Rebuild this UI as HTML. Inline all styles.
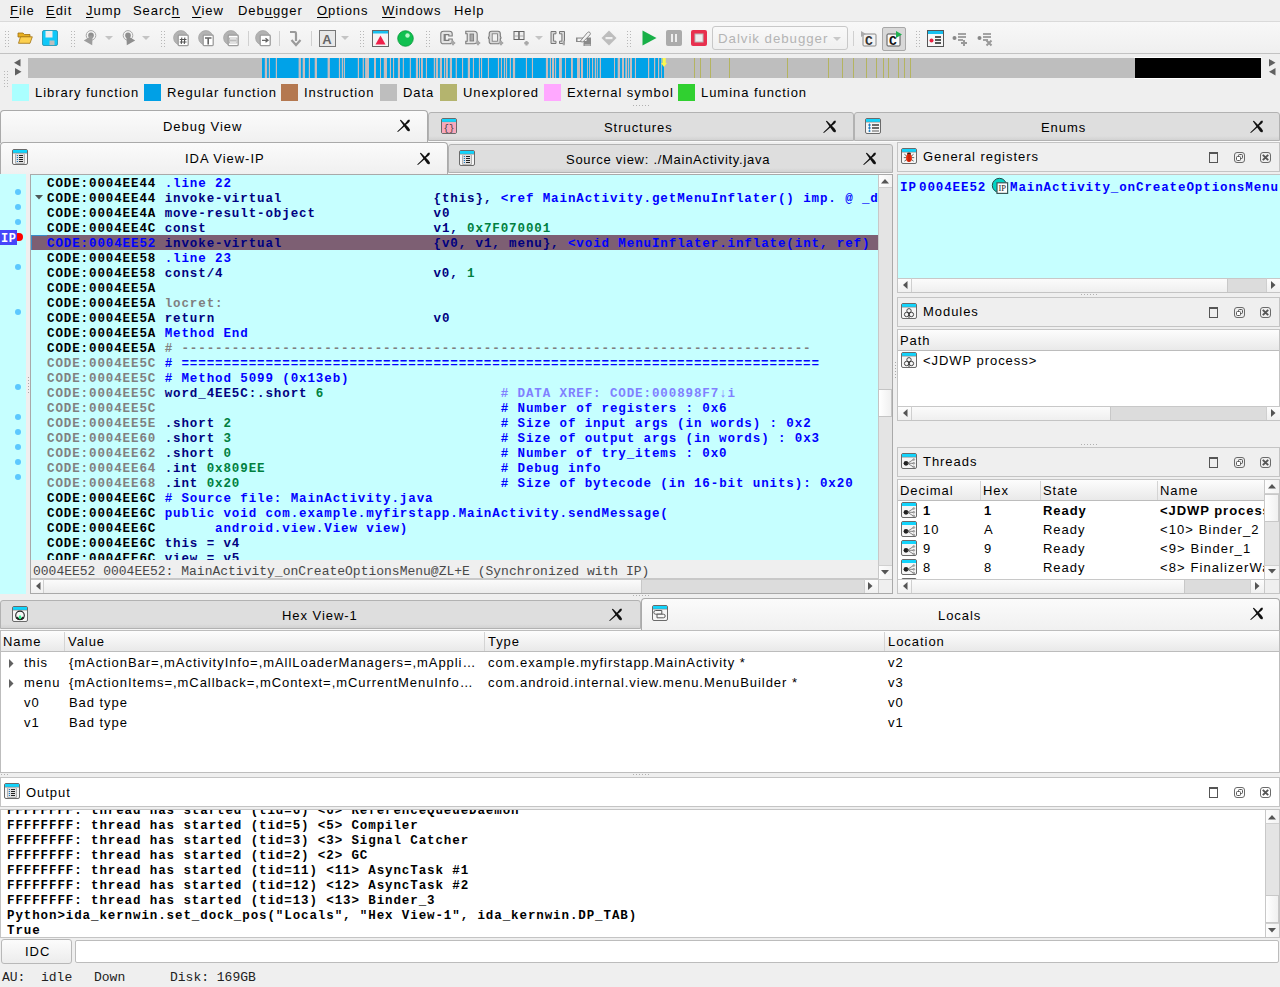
<!DOCTYPE html><html><head><meta charset="utf-8"><style>
*{box-sizing:border-box;margin:0;padding:0}
html,body{width:1280px;height:987px;overflow:hidden;background:#efefef;font-family:"Liberation Sans",sans-serif;font-size:13px;color:#000;letter-spacing:0.95px}
.a{position:absolute}
.t{position:absolute;white-space:pre;line-height:15px}
.cl{position:absolute;font-family:"Liberation Mono",monospace;font-weight:bold;font-size:12.5px;letter-spacing:0.9px;white-space:pre;line-height:15px;height:15px;margin-top:1px}
.tabsel{position:absolute;background:linear-gradient(#fbfbfb,#f0f0f0);border:1px solid #aaaaaa;border-bottom:none;border-radius:4px 4px 0 0}
.tabun{position:absolute;background:linear-gradient(#dedede 85%,#d2d2d2);border:1px solid #b2b2b2;border-radius:3px 3px 0 0}
.hdr{position:absolute;background:linear-gradient(#fdfdfd,#e9e9e9);border-bottom:1px solid #bcbcbc}
svg{position:absolute;overflow:visible}
</style></head><body>
<div class="t" style="left:10px;top:3px"><u style="text-decoration:underline;text-underline-offset:2px;text-decoration-thickness:1px">F</u>ile</div>
<div class="t" style="left:46px;top:3px"><u style="text-decoration:underline;text-underline-offset:2px;text-decoration-thickness:1px">E</u>dit</div>
<div class="t" style="left:86px;top:3px"><u style="text-decoration:underline;text-underline-offset:2px;text-decoration-thickness:1px">J</u>ump</div>
<div class="t" style="left:133px;top:3px">Searc<u style="text-decoration:underline;text-underline-offset:2px;text-decoration-thickness:1px">h</u></div>
<div class="t" style="left:192px;top:3px"><u style="text-decoration:underline;text-underline-offset:2px;text-decoration-thickness:1px">V</u>iew</div>
<div class="t" style="left:238px;top:3px">Deb<u style="text-decoration:underline;text-underline-offset:2px;text-decoration-thickness:1px">u</u>gger</div>
<div class="t" style="left:317px;top:3px"><u style="text-decoration:underline;text-underline-offset:2px;text-decoration-thickness:1px">O</u>ptions</div>
<div class="t" style="left:382px;top:3px"><u style="text-decoration:underline;text-underline-offset:2px;text-decoration-thickness:1px">W</u>indows</div>
<div class="t" style="left:454px;top:3px">Help</div>
<div class="a" style="left:0px;top:21px;width:1280px;height:1px;background:#dadada;"></div>
<div class="a" style="left:0px;top:22px;width:1280px;height:31px;background:linear-gradient(#f8f8f8,#efefef);"></div>
<div class="a" style="left:0px;top:53px;width:1280px;height:1px;background:#c2c2c2;"></div>
<svg style="left:5px;top:30px" width="5" height="17" viewBox="0 0 5 17"><rect x="0" y="1" width="1" height="1" fill="#b8b8b8"/><rect x="3" y="1" width="1" height="1" fill="#b8b8b8"/><rect x="0" y="4" width="1" height="1" fill="#b8b8b8"/><rect x="3" y="4" width="1" height="1" fill="#b8b8b8"/><rect x="0" y="7" width="1" height="1" fill="#b8b8b8"/><rect x="3" y="7" width="1" height="1" fill="#b8b8b8"/><rect x="0" y="10" width="1" height="1" fill="#b8b8b8"/><rect x="3" y="10" width="1" height="1" fill="#b8b8b8"/><rect x="0" y="13" width="1" height="1" fill="#b8b8b8"/><rect x="3" y="13" width="1" height="1" fill="#b8b8b8"/><rect x="0" y="16" width="1" height="1" fill="#b8b8b8"/><rect x="3" y="16" width="1" height="1" fill="#b8b8b8"/></svg>
<svg style="left:71px;top:30px" width="5" height="17" viewBox="0 0 5 17"><rect x="0" y="1" width="1" height="1" fill="#b8b8b8"/><rect x="3" y="1" width="1" height="1" fill="#b8b8b8"/><rect x="0" y="4" width="1" height="1" fill="#b8b8b8"/><rect x="3" y="4" width="1" height="1" fill="#b8b8b8"/><rect x="0" y="7" width="1" height="1" fill="#b8b8b8"/><rect x="3" y="7" width="1" height="1" fill="#b8b8b8"/><rect x="0" y="10" width="1" height="1" fill="#b8b8b8"/><rect x="3" y="10" width="1" height="1" fill="#b8b8b8"/><rect x="0" y="13" width="1" height="1" fill="#b8b8b8"/><rect x="3" y="13" width="1" height="1" fill="#b8b8b8"/><rect x="0" y="16" width="1" height="1" fill="#b8b8b8"/><rect x="3" y="16" width="1" height="1" fill="#b8b8b8"/></svg>
<svg style="left:161px;top:30px" width="5" height="17" viewBox="0 0 5 17"><rect x="0" y="1" width="1" height="1" fill="#b8b8b8"/><rect x="3" y="1" width="1" height="1" fill="#b8b8b8"/><rect x="0" y="4" width="1" height="1" fill="#b8b8b8"/><rect x="3" y="4" width="1" height="1" fill="#b8b8b8"/><rect x="0" y="7" width="1" height="1" fill="#b8b8b8"/><rect x="3" y="7" width="1" height="1" fill="#b8b8b8"/><rect x="0" y="10" width="1" height="1" fill="#b8b8b8"/><rect x="3" y="10" width="1" height="1" fill="#b8b8b8"/><rect x="0" y="13" width="1" height="1" fill="#b8b8b8"/><rect x="3" y="13" width="1" height="1" fill="#b8b8b8"/><rect x="0" y="16" width="1" height="1" fill="#b8b8b8"/><rect x="3" y="16" width="1" height="1" fill="#b8b8b8"/></svg>
<svg style="left:360px;top:30px" width="5" height="17" viewBox="0 0 5 17"><rect x="0" y="1" width="1" height="1" fill="#b8b8b8"/><rect x="3" y="1" width="1" height="1" fill="#b8b8b8"/><rect x="0" y="4" width="1" height="1" fill="#b8b8b8"/><rect x="3" y="4" width="1" height="1" fill="#b8b8b8"/><rect x="0" y="7" width="1" height="1" fill="#b8b8b8"/><rect x="3" y="7" width="1" height="1" fill="#b8b8b8"/><rect x="0" y="10" width="1" height="1" fill="#b8b8b8"/><rect x="3" y="10" width="1" height="1" fill="#b8b8b8"/><rect x="0" y="13" width="1" height="1" fill="#b8b8b8"/><rect x="3" y="13" width="1" height="1" fill="#b8b8b8"/><rect x="0" y="16" width="1" height="1" fill="#b8b8b8"/><rect x="3" y="16" width="1" height="1" fill="#b8b8b8"/></svg>
<svg style="left:426px;top:30px" width="5" height="17" viewBox="0 0 5 17"><rect x="0" y="1" width="1" height="1" fill="#b8b8b8"/><rect x="3" y="1" width="1" height="1" fill="#b8b8b8"/><rect x="0" y="4" width="1" height="1" fill="#b8b8b8"/><rect x="3" y="4" width="1" height="1" fill="#b8b8b8"/><rect x="0" y="7" width="1" height="1" fill="#b8b8b8"/><rect x="3" y="7" width="1" height="1" fill="#b8b8b8"/><rect x="0" y="10" width="1" height="1" fill="#b8b8b8"/><rect x="3" y="10" width="1" height="1" fill="#b8b8b8"/><rect x="0" y="13" width="1" height="1" fill="#b8b8b8"/><rect x="3" y="13" width="1" height="1" fill="#b8b8b8"/><rect x="0" y="16" width="1" height="1" fill="#b8b8b8"/><rect x="3" y="16" width="1" height="1" fill="#b8b8b8"/></svg>
<svg style="left:627px;top:30px" width="5" height="17" viewBox="0 0 5 17"><rect x="0" y="1" width="1" height="1" fill="#b8b8b8"/><rect x="3" y="1" width="1" height="1" fill="#b8b8b8"/><rect x="0" y="4" width="1" height="1" fill="#b8b8b8"/><rect x="3" y="4" width="1" height="1" fill="#b8b8b8"/><rect x="0" y="7" width="1" height="1" fill="#b8b8b8"/><rect x="3" y="7" width="1" height="1" fill="#b8b8b8"/><rect x="0" y="10" width="1" height="1" fill="#b8b8b8"/><rect x="3" y="10" width="1" height="1" fill="#b8b8b8"/><rect x="0" y="13" width="1" height="1" fill="#b8b8b8"/><rect x="3" y="13" width="1" height="1" fill="#b8b8b8"/><rect x="0" y="16" width="1" height="1" fill="#b8b8b8"/><rect x="3" y="16" width="1" height="1" fill="#b8b8b8"/></svg>
<svg style="left:916px;top:30px" width="5" height="17" viewBox="0 0 5 17"><rect x="0" y="1" width="1" height="1" fill="#b8b8b8"/><rect x="3" y="1" width="1" height="1" fill="#b8b8b8"/><rect x="0" y="4" width="1" height="1" fill="#b8b8b8"/><rect x="3" y="4" width="1" height="1" fill="#b8b8b8"/><rect x="0" y="7" width="1" height="1" fill="#b8b8b8"/><rect x="3" y="7" width="1" height="1" fill="#b8b8b8"/><rect x="0" y="10" width="1" height="1" fill="#b8b8b8"/><rect x="3" y="10" width="1" height="1" fill="#b8b8b8"/><rect x="0" y="13" width="1" height="1" fill="#b8b8b8"/><rect x="3" y="13" width="1" height="1" fill="#b8b8b8"/><rect x="0" y="16" width="1" height="1" fill="#b8b8b8"/><rect x="3" y="16" width="1" height="1" fill="#b8b8b8"/></svg>
<svg style="left:17px;top:31px" width="16" height="13" viewBox="0 0 16 13"><path d="M1 2 L6 2 L7.5 3.5 L13 3.5 L13 6 L1 6 Z" fill="#e8b020" stroke="#a07010" stroke-width="0.8"/><path d="M1.5 12.3 L3.5 5.8 L15.3 5.8 L13 12.3 Z" fill="#fcd050" stroke="#a07010" stroke-width="0.8"/></svg>
<svg style="left:42px;top:30px" width="16" height="16" viewBox="0 0 16 16"><rect x="0.5" y="0.5" width="15" height="15" rx="1.5" fill="#10c8f8" stroke="#1890b0" stroke-width="0.8"/><rect x="3.5" y="1" width="7" height="6.5" fill="#eeeeee"/><rect x="7.5" y="10.5" width="5" height="4.5" fill="#bdbdbd"/></svg>
<svg style="left:83px;top:30px" width="15" height="16" viewBox="0 0 15 16"><circle cx="8" cy="5.4" r="4.8" fill="#f4f4f4" stroke="#a8a8a8" stroke-width="1"/><circle cx="8" cy="5.4" r="2.8" fill="#8e8e8e"/><path d="M0.8 10.5 L6.2 7.2 L6.2 5.5 L9.6 5.5 L9.2 15.2 Z" fill="#9c9c9c"/></svg>
<svg style="left:105px;top:36px" width="8" height="5" viewBox="0 0 8 5"><path d="M0 0 L8 0 L4 4 Z" fill="#c4c4c4"/></svg>
<svg style="left:122px;top:30px" width="15" height="16" viewBox="0 0 15 16"><circle cx="6" cy="5.4" r="4.8" fill="#f4f4f4" stroke="#a8a8a8" stroke-width="1"/><circle cx="6" cy="5.4" r="2.8" fill="#8e8e8e"/><path d="M13.2 10.5 L7.8 7.2 L7.8 5.5 L4.4 5.5 L4.8 15.2 Z" fill="#8e8e8e"/></svg>
<svg style="left:142px;top:36px" width="8" height="5" viewBox="0 0 8 5"><path d="M0 0 L8 0 L4 4 Z" fill="#c4c4c4"/></svg>
<svg style="left:173px;top:30px" width="17" height="17" viewBox="0 0 17 17"><circle cx="7.8" cy="7.8" r="7.2" fill="#b2b2b2" stroke="#a4a4a4" stroke-width="0.8"/><rect x="5.2" y="5.2" width="10" height="10.4" rx="0.8" fill="#ffffff" stroke="#9c9c9c" stroke-width="1.3"/><path d="M8.8 7.5 L8.3 14 M11.8 7.5 L11.3 14 M6.8 9.5 L13.5 9.5 M6.8 12 L13.5 12" stroke="#555" stroke-width="1.1"/></svg>
<svg style="left:198px;top:30px" width="17" height="17" viewBox="0 0 17 17"><circle cx="7.8" cy="7.8" r="7.2" fill="#b2b2b2" stroke="#a4a4a4" stroke-width="0.8"/><rect x="5.2" y="5.2" width="10" height="10.4" rx="0.8" fill="#ffffff" stroke="#9c9c9c" stroke-width="1.3"/><path d="M7 8 L13.5 8 M10.2 8 L10.2 14.5" stroke="#666" stroke-width="1.6"/></svg>
<svg style="left:223px;top:30px" width="17" height="17" viewBox="0 0 17 17"><circle cx="7.8" cy="7.8" r="7.2" fill="#b2b2b2" stroke="#a4a4a4" stroke-width="0.8"/><rect x="5.2" y="5.2" width="10" height="10.4" rx="0.8" fill="#ffffff" stroke="#9c9c9c" stroke-width="1.3"/><path d="M7 10.5 L13.5 10.5" stroke="#bbb" stroke-width="2.2"/><rect x="6.5" y="8" width="7.5" height="5" fill="none" stroke="#999" stroke-width="0.6"/></svg>
<div class="a" style="left:248px;top:31px;width:1px;height:15px;background:#d0d0d0;"></div>
<svg style="left:255px;top:30px" width="17" height="17" viewBox="0 0 17 17"><circle cx="7.8" cy="7.8" r="7.2" fill="#b2b2b2" stroke="#a4a4a4" stroke-width="0.8"/><rect x="5.2" y="5.2" width="10" height="10.4" rx="0.8" fill="#ffffff" stroke="#9c9c9c" stroke-width="1.3"/><path d="M7 10.3 L12.5 10.3 M10.5 8.3 L13 10.3 L10.5 12.3" stroke="#666" stroke-width="1.3" fill="none"/></svg>
<div class="a" style="left:279px;top:31px;width:1px;height:15px;background:#d0d0d0;"></div>
<svg style="left:289px;top:30px" width="12" height="16" viewBox="0 0 12 16"><path d="M1 2 L6 2 Q7 2 7 4 L7 11" stroke="#9a9a9a" stroke-width="2.2" fill="none"/><path d="M2.5 10 L7 15 L11.5 10" stroke="#9a9a9a" stroke-width="2.2" fill="none"/></svg>
<div class="a" style="left:311px;top:31px;width:1px;height:15px;background:#d0d0d0;"></div>
<svg style="left:319px;top:30px" width="17" height="17" viewBox="0 0 17 17"><rect x="0.5" y="0.5" width="16" height="16" fill="#e8e8e8" stroke="#777" stroke-width="1"/><text x="8.5" y="13.5" font-family="Liberation Sans" font-weight="bold" font-size="13" text-anchor="middle" fill="#666">A</text></svg>
<svg style="left:341px;top:36px" width="8" height="5" viewBox="0 0 8 5"><path d="M0 0 L8 0 L4 4 Z" fill="#c4c4c4"/></svg>
<svg style="left:372px;top:30px" width="17" height="17" viewBox="0 0 17 17"><rect x="0.5" y="0.5" width="16" height="16" fill="#f4f4f4" stroke="#666"/><rect x="1" y="1" width="15" height="2.5" fill="#18c0f0"/><path d="M3.5 14.5 L8.5 5.5 L13.5 14.5 Z" fill="#f0204a"/></svg>
<svg style="left:397px;top:30px" width="17" height="17" viewBox="0 0 17 17"><circle cx="8.5" cy="8.5" r="7.8" fill="#10c050" stroke="#089838" stroke-width="0.8"/><circle cx="10.5" cy="5.5" r="2.2" fill="#b8f8c8"/></svg>
<svg style="left:440px;top:30px" width="16" height="17" viewBox="0 0 16 17"><path d="M3.5 1.2 H9.5 Q12.2 1.2 12.2 3.8 V6 H8.8 V4.6 H5.2 V10.4 H8.8 V9 H12.2 V11.2 Q12.2 13.8 9.5 13.8 H3.5 Q0.8 13.8 0.8 11.2 V3.8 Q0.8 1.2 3.5 1.2 Z" fill="#e4e4e4" stroke="#7a7a7a" stroke-width="1.1"/><path d="M4.2 4 V11" stroke="#666" stroke-width="1"/><path d="M13 10.8 V15.2 M10.8 13 H15.2" stroke="#a8a8a8" stroke-width="2.2"/></svg>
<svg style="left:465px;top:30px" width="16" height="17" viewBox="0 0 16 17"><path d="M0.8 1.2 H9 Q12.2 1.2 12.2 4.4 V10.6 Q12.2 13.8 9 13.8 H0.8 V11.2 H2.2 V3.8 H0.8 Z" fill="#e4e4e4" stroke="#7a7a7a" stroke-width="1.1"/><rect x="5" y="4" width="3.6" height="7" fill="#a8a8a8" stroke="#777" stroke-width="0.8"/><path d="M13 10.8 V15.2 M10.8 13 H15.2" stroke="#a8a8a8" stroke-width="2.2"/></svg>
<svg style="left:488px;top:30px" width="16" height="17" viewBox="0 0 16 17"><path d="M3.5 1.2 H10 Q12.3 1.2 12.3 3.8 V5.8 Q13.6 7.5 12.3 9.2 V11.2 Q12.3 13.8 10 13.8 H3.5 Q1.2 13.8 1.2 11.2 V9.2 Q-0.1 7.5 1.2 5.8 V3.8 Q1.2 1.2 3.5 1.2 Z" fill="#d8d8d8" stroke="#7a7a7a" stroke-width="1.1"/><rect x="4.2" y="3.8" width="5.2" height="7.4" fill="#f2f2f2" stroke="#777" stroke-width="0.8"/><path d="M13 10.8 V15.2 M10.8 13 H15.2" stroke="#a8a8a8" stroke-width="2.2"/></svg>
<svg style="left:513px;top:30px" width="16" height="17" viewBox="0 0 16 17"><rect x="1" y="1.5" width="4.8" height="8" fill="#eee" stroke="#666" stroke-width="1"/><rect x="6.2" y="1.5" width="4.8" height="8" fill="#eee" stroke="#666" stroke-width="1"/><path d="M1.5 6 H5.3 M6.7 6 H10.5" stroke="#999" stroke-width="0.8"/><path d="M13.5 11 V15.5 M11.3 13.2 H15.7" stroke="#a8a8a8" stroke-width="2.2"/></svg>
<svg style="left:535px;top:36px" width="8" height="5" viewBox="0 0 8 5"><path d="M0 0 L8 0 L4 4 Z" fill="#c4c4c4"/></svg>
<svg style="left:550px;top:30px" width="17" height="17" viewBox="0 0 17 17"><path d="M1 1.5 H6 V3.8 H3.6 V11.2 H6 V13.5 H1 Z" fill="#d8d8d8" stroke="#777" stroke-width="1"/><path d="M9.5 1.5 H14.5 V13.5 H9.5 V11.2 H11.9 V3.8 H9.5 Z" fill="#d8d8d8" stroke="#777" stroke-width="1"/><path d="M13.8 10.8 V15.2 M10.8 13.8.8 H15.2" stroke="#a8a8a8" stroke-width="2.2"/></svg>
<svg style="left:575px;top:30px" width="17" height="17" viewBox="0 0 17 17"><path d="M1 7.5 H16 V16 H8.5 L8.5 12 L1 12 Z" fill="#8a8a8a"/><rect x="2.5" y="8.6" width="9" height="2.4" fill="#f4f4f4"/><path d="M5 11.5 L12.5 2.5 Q13.8 1.3 15 2.5 Q16 3.7 14.8 5 L7.8 12 Z" fill="#f2f2f2" stroke="#8a8a8a" stroke-width="1"/><path d="M9.6 14 H15.5 V16 H9.6 Z" fill="#b0b0b0"/></svg>
<svg style="left:601px;top:30px" width="16" height="16" viewBox="0 0 16 16"><path d="M8 0.5 L15.5 8 L8 15.5 L0.5 8 Z" fill="#bdbdbd"/><rect x="4.5" y="7" width="7" height="2.2" fill="#f0f0f0"/></svg>
<svg style="left:642px;top:30px" width="15" height="16" viewBox="0 0 15 16"><path d="M0.5 0.5 L14.5 8 L0.5 15.5 Z" fill="#18b048"/></svg>
<svg style="left:666px;top:30px" width="16" height="16" viewBox="0 0 16 16"><rect x="0" y="0" width="16" height="16" rx="2" fill="#ababab"/><rect x="5" y="4" width="2" height="8" fill="#eee"/><rect x="9" y="4" width="2" height="8" fill="#eee"/></svg>
<svg style="left:691px;top:30px" width="16" height="16" viewBox="0 0 16 16"><rect x="0" y="0" width="16" height="16" rx="2" fill="#e8304e"/><rect x="4" y="4" width="8" height="8" fill="#eee" stroke="#b8b8b8"/></svg>
<div class="a" style="left:712px;top:26px;width:136px;height:24px;border:1px solid #c8c8c8;border-radius:3px;background:linear-gradient(#f9f9f9,#f0f0f0)"></div>
<div class="t" style="left:718px;top:31px;color:#b4b4b4;font-size:13.3px">Dalvik debugger</div>
<svg style="left:833px;top:37px" width="8" height="5" viewBox="0 0 8 5"><path d="M0 0 L8 0 L4 4 Z" fill="#c8c8c8"/></svg>
<div class="a" style="left:853px;top:31px;width:1px;height:15px;background:#d0d0d0;"></div>
<svg style="left:860px;top:30px" width="18" height="17" viewBox="0 0 18 17"><rect x="3" y="4" width="13" height="12" rx="1" fill="#f3f3f3" stroke="#888"/><path d="M1 1 L6 4 L1 7 Z" fill="#aaa"/><text x="9.5" y="14.5" font-family="Liberation Mono" font-weight="bold" font-size="13" text-anchor="middle" fill="#333">C</text></svg>
<div class="a" style="left:882px;top:27px;width:24px;height:24px;border:1px solid #a8a8a8;border-radius:2px;background:#d8d8d8"></div>
<svg style="left:886px;top:30px" width="18" height="17" viewBox="0 0 18 17"><rect x="1" y="4" width="13" height="12" rx="1" fill="#fafafa" stroke="#555"/><path d="M10 1 L16 4.5 L10 8 Z" fill="#20b050"/><text x="7.5" y="14.5" font-family="Liberation Mono" font-weight="bold" font-size="13" text-anchor="middle" fill="#111">C</text></svg>
<svg style="left:927px;top:30px" width="17" height="17" viewBox="0 0 17 17"><rect x="0.5" y="0.5" width="16" height="16" fill="#f7f7f7" stroke="#555"/><rect x="1" y="1" width="15" height="3" fill="#18c0f0"/><circle cx="4.5" cy="10.5" r="2" fill="#e82040"/><path d="M8 7 L14 7 M8 10 L14 10 M8 13 L14 13" stroke="#222" stroke-width="1.4"/></svg>
<svg style="left:952px;top:31px" width="17" height="16" viewBox="0 0 17 16"><circle cx="2.5" cy="7" r="2" fill="#888"/><path d="M6 3 L14 3 M6 6 L14 6 M6 9 L11 9" stroke="#888" stroke-width="1.3"/><path d="M9 12 L15 12 M12 9 L12 15" stroke="#999" stroke-width="2"/></svg>
<svg style="left:977px;top:31px" width="17" height="16" viewBox="0 0 17 16"><circle cx="2.5" cy="7" r="2" fill="#888"/><path d="M6 3 L14 3 M6 6 L14 6 M6 9 L11 9" stroke="#888" stroke-width="1.3"/><path d="M9.5 9.5 L14.5 14.5 M14.5 9.5 L9.5 14.5" stroke="#999" stroke-width="2"/></svg>
<svg style="left:4px;top:70px" width="5" height="18" viewBox="0 0 5 18"><rect x="0" y="1" width="1" height="1" fill="#b8b8b8"/><rect x="3" y="1" width="1" height="1" fill="#b8b8b8"/><rect x="0" y="4" width="1" height="1" fill="#b8b8b8"/><rect x="3" y="4" width="1" height="1" fill="#b8b8b8"/><rect x="0" y="7" width="1" height="1" fill="#b8b8b8"/><rect x="3" y="7" width="1" height="1" fill="#b8b8b8"/><rect x="0" y="10" width="1" height="1" fill="#b8b8b8"/><rect x="3" y="10" width="1" height="1" fill="#b8b8b8"/><rect x="0" y="13" width="1" height="1" fill="#b8b8b8"/><rect x="3" y="13" width="1" height="1" fill="#b8b8b8"/><rect x="0" y="16" width="1" height="1" fill="#b8b8b8"/><rect x="3" y="16" width="1" height="1" fill="#b8b8b8"/></svg>
<svg style="left:14px;top:59px" width="7" height="8" viewBox="0 0 7 8"><path d="M6.5 0 L6.5 7.5 L0 3.75 Z" fill="#606060"/></svg>
<svg style="left:15px;top:68px" width="7" height="8" viewBox="0 0 7 8"><path d="M0 0 L0 7.5 L6.5 3.75 Z" fill="#606060"/></svg>
<svg style="left:1269px;top:59px" width="7" height="8" viewBox="0 0 7 8"><path d="M0 0 L0 7.5 L6.5 3.75 Z" fill="#606060"/></svg>
<svg style="left:1269px;top:68px" width="7" height="8" viewBox="0 0 7 8"><path d="M6.5 0 L6.5 7.5 L0 3.75 Z" fill="#606060"/></svg>
<div class="a" style="left:28px;top:58px;width:234px;height:20px;background:#bebebe;"></div>
<svg style="left:262px;top:58px" width="402" height="20" viewBox="0 0 402 20"><rect x="0" y="0" width="402" height="20" fill="#00a2e8"/><rect x="2.8" y="0" width="2.3" height="20" fill="#c8bcbc"/><rect x="6.8" y="0" width="1.2" height="20" fill="#c8bcbc"/><rect x="13.8" y="0" width="1.2" height="20" fill="#c8bcbc"/><rect x="36.6" y="0" width="2.3" height="20" fill="#c8bcbc"/><rect x="40.7" y="0" width="2.3" height="20" fill="#c8bcbc"/><rect x="46.8" y="0" width="1.2" height="20" fill="#c8bcbc"/><rect x="52.7" y="0" width="2.3" height="20" fill="#c8bcbc"/><rect x="65.6" y="0" width="2.3" height="20" fill="#c8bcbc"/><rect x="76.9" y="0" width="1.2" height="20" fill="#c8bcbc"/><rect x="79.8" y="0" width="1.2" height="20" fill="#c8bcbc"/><rect x="81.8" y="0" width="1.2" height="20" fill="#c8bcbc"/><rect x="95.8" y="0" width="1.2" height="20" fill="#c8bcbc"/><rect x="100.7" y="0" width="1.2" height="20" fill="#c8bcbc"/><rect x="103.1" y="0" width="3.9" height="20" fill="#c8bcbc"/><rect x="112.0" y="0" width="2.0" height="20" fill="#c8bcbc"/><rect x="118.0" y="0" width="1.0" height="20" fill="#c8bcbc"/><rect x="121.8" y="0" width="3.2" height="20" fill="#c8bcbc"/><rect x="127.9" y="0" width="1.1" height="20" fill="#c8bcbc"/><rect x="131.0" y="0" width="1.1" height="20" fill="#c8bcbc"/><rect x="135.9" y="0" width="2.1" height="20" fill="#c8bcbc"/><rect x="140.8" y="0" width="1.1" height="20" fill="#c8bcbc"/><rect x="147.8" y="0" width="1.1" height="20" fill="#c8bcbc"/><rect x="153.9" y="0" width="2.1" height="20" fill="#c8bcbc"/><rect x="157.0" y="0" width="1.0" height="20" fill="#c8bcbc"/><rect x="159.0" y="0" width="1.9" height="20" fill="#c8bcbc"/><rect x="163.9" y="0" width="1.1" height="20" fill="#c8bcbc"/><rect x="171.8" y="0" width="1.2" height="20" fill="#c8bcbc"/><rect x="173.8" y="0" width="2.3" height="20" fill="#c8bcbc"/><rect x="177.8" y="0" width="2.2" height="20" fill="#c8bcbc"/><rect x="182.0" y="0" width="1.2" height="20" fill="#c8bcbc"/><rect x="184.0" y="0" width="1.9" height="20" fill="#c8bcbc"/><rect x="187.8" y="0" width="2.2" height="20" fill="#c8bcbc"/><rect x="193.7" y="0" width="1.2" height="20" fill="#c8bcbc"/><rect x="200.0" y="0" width="1.1" height="20" fill="#c8bcbc"/><rect x="205.8" y="0" width="2.2" height="20" fill="#c8bcbc"/><rect x="210.9" y="0" width="1.1" height="20" fill="#c8bcbc"/><rect x="216.9" y="0" width="1.1" height="20" fill="#c8bcbc"/><rect x="219.0" y="0" width="1.1" height="20" fill="#c8bcbc"/><rect x="225.9" y="0" width="1.1" height="20" fill="#c8bcbc"/><rect x="235.9" y="0" width="1.1" height="20" fill="#c8bcbc"/><rect x="238.9" y="0" width="1.1" height="20" fill="#c8bcbc"/><rect x="241.9" y="0" width="1.1" height="20" fill="#c8bcbc"/><rect x="243.9" y="0" width="1.2" height="20" fill="#c8bcbc"/><rect x="247.8" y="0" width="1.2" height="20" fill="#c8bcbc"/><rect x="250.9" y="0" width="2.2" height="20" fill="#c8bcbc"/><rect x="263.9" y="0" width="1.1" height="20" fill="#c8bcbc"/><rect x="269.9" y="0" width="1.1" height="20" fill="#c8bcbc"/><rect x="283.9" y="0" width="2.2" height="20" fill="#c8bcbc"/><rect x="287.8" y="0" width="1.2" height="20" fill="#c8bcbc"/><rect x="290.0" y="0" width="2.1" height="20" fill="#c8bcbc"/><rect x="293.0" y="0" width="1.1" height="20" fill="#c8bcbc"/><rect x="297.0" y="0" width="2.9" height="20" fill="#c8bcbc"/><rect x="303.0" y="0" width="1.0" height="20" fill="#c8bcbc"/><rect x="309.0" y="0" width="1.9" height="20" fill="#c8bcbc"/><rect x="315.0" y="0" width="3.0" height="20" fill="#c8bcbc"/><rect x="319.0" y="0" width="2.0" height="20" fill="#c8bcbc"/><rect x="325.0" y="0" width="0.9" height="20" fill="#c8bcbc"/><rect x="327.0" y="0" width="0.9" height="20" fill="#c8bcbc"/><rect x="330.0" y="0" width="1.1" height="20" fill="#c8bcbc"/><rect x="332.8" y="0" width="1.2" height="20" fill="#c8bcbc"/><rect x="334.8" y="0" width="1.0" height="20" fill="#c8bcbc"/><rect x="337.7" y="0" width="1.3" height="20" fill="#c8bcbc"/><rect x="352.0" y="0" width="1.0" height="20" fill="#c8bcbc"/><rect x="355.7" y="0" width="2.4" height="20" fill="#c8bcbc"/><rect x="359.9" y="0" width="2.1" height="20" fill="#c8bcbc"/><rect x="363.3" y="0" width="1.9" height="20" fill="#c8bcbc"/><rect x="366.0" y="0" width="1.2" height="20" fill="#c8bcbc"/><rect x="368.0" y="0" width="2.0" height="20" fill="#c8bcbc"/><rect x="372.9" y="0" width="1.1" height="20" fill="#c8bcbc"/><rect x="386.0" y="0" width="1.2" height="20" fill="#c8bcbc"/><rect x="392.0" y="0" width="1.2" height="20" fill="#c8bcbc"/><rect x="396.0" y="0" width="1.2" height="20" fill="#c8bcbc"/><rect x="399.0" y="0" width="0.8" height="20" fill="#c8bcbc"/></svg>
<div class="a" style="left:664px;top:58px;width:471px;height:20px;background:#bebebe;"></div>
<div class="a" style="left:694px;top:58px;width:1px;height:20px;background:#b4b460;"></div>
<div class="a" style="left:700px;top:58px;width:1px;height:20px;background:#b4b460;"></div>
<div class="a" style="left:710px;top:58px;width:1px;height:20px;background:#b4b460;"></div>
<div class="a" style="left:729px;top:58px;width:1px;height:20px;background:#b4b460;"></div>
<div class="a" style="left:787px;top:58px;width:1px;height:20px;background:#b4b460;"></div>
<div class="a" style="left:828px;top:58px;width:1px;height:20px;background:#b4b460;"></div>
<div class="a" style="left:842px;top:58px;width:1px;height:20px;background:#b4b460;"></div>
<div class="a" style="left:853px;top:58px;width:1px;height:20px;background:#b4b460;"></div>
<div class="a" style="left:866px;top:58px;width:1px;height:20px;background:#b4b460;"></div>
<div class="a" style="left:876px;top:58px;width:1px;height:20px;background:#b4b460;"></div>
<div class="a" style="left:883px;top:58px;width:1px;height:20px;background:#b4b460;"></div>
<div class="a" style="left:888px;top:58px;width:1px;height:20px;background:#b4b460;"></div>
<div class="a" style="left:898px;top:58px;width:1px;height:20px;background:#b4b460;"></div>
<div class="a" style="left:904px;top:58px;width:1px;height:20px;background:#b4b460;"></div>
<div class="a" style="left:910px;top:58px;width:1px;height:20px;background:#b4b460;"></div>
<svg style="left:661px;top:58px" width="6" height="9" viewBox="0 0 6 9"><path d="M1.3 0 L4.7 0 L4.7 5 L6 5 L3 9 L0 5 L1.3 5 Z" fill="#fcf850"/></svg>
<div class="a" style="left:1135px;top:58px;width:126px;height:20px;background:#000;"></div>
<div class="a" style="left:1134px;top:57px;width:128px;height:1px;background:#fff;"></div>
<div class="a" style="left:1134px;top:78px;width:128px;height:1px;background:#fff;"></div>
<div class="a" style="left:12px;top:84px;width:17px;height:17px;background:#aaffff;"></div>
<div class="t" style="left:35px;top:85px;">Library function</div>
<div class="a" style="left:144px;top:84px;width:17px;height:17px;background:#00a0e6;"></div>
<div class="t" style="left:167px;top:85px;">Regular function</div>
<div class="a" style="left:281px;top:84px;width:17px;height:17px;background:#b47850;"></div>
<div class="t" style="left:304px;top:85px;">Instruction</div>
<div class="a" style="left:380px;top:84px;width:17px;height:17px;background:#bebebe;"></div>
<div class="t" style="left:403px;top:85px;">Data</div>
<div class="a" style="left:440px;top:84px;width:17px;height:17px;background:#b4b46e;"></div>
<div class="t" style="left:463px;top:85px;">Unexplored</div>
<div class="a" style="left:544px;top:84px;width:17px;height:17px;background:#ffa8ff;"></div>
<div class="t" style="left:567px;top:85px;">External symbol</div>
<div class="a" style="left:678px;top:84px;width:17px;height:17px;background:#30d030;"></div>
<div class="t" style="left:701px;top:85px;">Lumina function</div>
<svg style="left:633px;top:105px" width="18" height="2" viewBox="0 0 18 2"><rect x="0" y="0" width="1" height="1" fill="#b0b0b0"/><rect x="3" y="0" width="1" height="1" fill="#b0b0b0"/><rect x="6" y="0" width="1" height="1" fill="#b0b0b0"/><rect x="9" y="0" width="1" height="1" fill="#b0b0b0"/><rect x="12" y="0" width="1" height="1" fill="#b0b0b0"/><rect x="15" y="0" width="1" height="1" fill="#b0b0b0"/></svg>
<div class="tabsel" style="left:0;top:110px;width:428px;height:33px"></div>
<div class="t" style="left:163px;top:119px;">Debug View</div>
<svg style="left:397px;top:119px" width="14" height="13" viewBox="0 0 14 13"><path d="M0.2 12.6 Q5 8.2 9.6 2.8 L10.9 4 Q6 9 0.9 12.9 Z" fill="#111"/><path d="M9.2 3.2 Q10.6 0.4 12.2 0.5 Q13.3 1.1 12.6 2.6 Q11.6 4.3 10.4 4.5 Z" fill="#111"/><path d="M3.2 0.9 Q3.6 0.6 4.1 1.1 L11.6 8.4 Q13.7 10.4 12.7 11.9 Q11.3 12.8 9.9 11.3 L3 1.6 Q2.8 1.1 3.2 0.9 Z" fill="#111"/></svg>
<div class="tabun" style="left:428px;top:112px;width:426px;height:29px"></div>
<svg style="left:441px;top:118px" width="16" height="16" viewBox="0 0 16 16"><rect x="0.5" y="0.5" width="15" height="15" rx="1.5" fill="#f6f6f6" stroke="#6a6a6a"/><rect x="1" y="1" width="14" height="3" fill="#12d4fc"/><line x1="1" y1="4.2" x2="15" y2="4.2" stroke="#777" stroke-width="0.6"/><rect x="1" y="4.4" width="14" height="10.6" fill="#f8a8bc"/><text x="8" y="13" font-family="Liberation Mono" font-size="9" text-anchor="middle" fill="#333" letter-spacing="0">{}</text></svg>
<div class="t" style="left:604px;top:120px;">Structures</div>
<svg style="left:823px;top:120px" width="14" height="13" viewBox="0 0 14 13"><path d="M0.2 12.6 Q5 8.2 9.6 2.8 L10.9 4 Q6 9 0.9 12.9 Z" fill="#111"/><path d="M9.2 3.2 Q10.6 0.4 12.2 0.5 Q13.3 1.1 12.6 2.6 Q11.6 4.3 10.4 4.5 Z" fill="#111"/><path d="M3.2 0.9 Q3.6 0.6 4.1 1.1 L11.6 8.4 Q13.7 10.4 12.7 11.9 Q11.3 12.8 9.9 11.3 L3 1.6 Q2.8 1.1 3.2 0.9 Z" fill="#111"/></svg>
<div class="tabun" style="left:854px;top:112px;width:426px;height:29px"></div>
<svg style="left:865px;top:118px" width="16" height="16" viewBox="0 0 16 16"><rect x="0.5" y="0.5" width="15" height="15" rx="1.5" fill="#f6f6f6" stroke="#6a6a6a"/><rect x="1" y="1" width="14" height="3" fill="#12d4fc"/><line x1="1" y1="4.2" x2="15" y2="4.2" stroke="#777" stroke-width="0.6"/><g fill="#1c7cc0"><path d="M3 7 h3 M4.5 5.5 v3" stroke="#1c7cc0" stroke-width="1"/><path d="M3 10 h3 M4.5 8.5 v3" stroke="#1c7cc0" stroke-width="1"/><circle cx="4.5" cy="13" r="1"/></g><g fill="#333"><rect x="7" y="6.3" width="7" height="1.4"/><rect x="7" y="9.3" width="7" height="1.4"/><rect x="7" y="12.3" width="7" height="1.4" fill="#888"/></g></svg>
<div class="t" style="left:1041px;top:120px;">Enums</div>
<svg style="left:1250px;top:120px" width="14" height="13" viewBox="0 0 14 13"><path d="M0.2 12.6 Q5 8.2 9.6 2.8 L10.9 4 Q6 9 0.9 12.9 Z" fill="#111"/><path d="M9.2 3.2 Q10.6 0.4 12.2 0.5 Q13.3 1.1 12.6 2.6 Q11.6 4.3 10.4 4.5 Z" fill="#111"/><path d="M3.2 0.9 Q3.6 0.6 4.1 1.1 L11.6 8.4 Q13.7 10.4 12.7 11.9 Q11.3 12.8 9.9 11.3 L3 1.6 Q2.8 1.1 3.2 0.9 Z" fill="#111"/></svg>
<div class="a" style="left:428px;top:141px;width:852px;height:1px;background:#fafafa;"></div>
<div class="tabsel" style="left:0;top:142px;width:448px;height:32px"></div>
<svg style="left:12px;top:149px" width="16" height="16" viewBox="0 0 16 16"><rect x="0.5" y="0.5" width="15" height="15" rx="1.5" fill="#f6f6f6" stroke="#6a6a6a"/><rect x="1" y="1" width="14" height="3" fill="#12d4fc"/><line x1="1" y1="4.2" x2="15" y2="4.2" stroke="#777" stroke-width="0.6"/><rect x="3" y="4.5" width="10" height="10.5" rx="1.5" fill="#a8a8a8"/><rect x="3.8" y="5" width="8.4" height="9.2" rx="1" fill="#e2e2e2"/><g fill="#1a78c0"><rect x="4.8" y="6" width="1.2" height="1"/><rect x="4.8" y="8" width="1.2" height="1"/><rect x="4.8" y="10" width="1.2" height="1"/><rect x="4.8" y="12" width="1.2" height="1"/></g><g fill="#222"><rect x="7" y="6" width="4" height="1"/><rect x="7" y="8" width="4" height="1"/><rect x="7" y="10" width="4" height="1"/><rect x="7" y="12" width="4" height="1"/></g></svg>
<div class="t" style="left:185px;top:151px;">IDA View-IP</div>
<svg style="left:417px;top:152px" width="14" height="13" viewBox="0 0 14 13"><path d="M0.2 12.6 Q5 8.2 9.6 2.8 L10.9 4 Q6 9 0.9 12.9 Z" fill="#111"/><path d="M9.2 3.2 Q10.6 0.4 12.2 0.5 Q13.3 1.1 12.6 2.6 Q11.6 4.3 10.4 4.5 Z" fill="#111"/><path d="M3.2 0.9 Q3.6 0.6 4.1 1.1 L11.6 8.4 Q13.7 10.4 12.7 11.9 Q11.3 12.8 9.9 11.3 L3 1.6 Q2.8 1.1 3.2 0.9 Z" fill="#111"/></svg>
<div class="tabun" style="left:448px;top:144px;width:445px;height:29px"></div>
<svg style="left:459px;top:150px" width="16" height="16" viewBox="0 0 16 16"><rect x="0.5" y="0.5" width="15" height="15" rx="1.5" fill="#f6f6f6" stroke="#6a6a6a"/><rect x="1" y="1" width="14" height="3" fill="#12d4fc"/><line x1="1" y1="4.2" x2="15" y2="4.2" stroke="#777" stroke-width="0.6"/><rect x="3" y="4.5" width="10" height="10.5" rx="1.5" fill="#a8a8a8"/><rect x="3.8" y="5" width="8.4" height="9.2" rx="1" fill="#e2e2e2"/><g fill="#1a78c0"><rect x="4.8" y="6" width="1.2" height="1"/><rect x="4.8" y="8" width="1.2" height="1"/><rect x="4.8" y="10" width="1.2" height="1"/><rect x="4.8" y="12" width="1.2" height="1"/></g><g fill="#222"><rect x="7" y="6" width="4" height="1"/><rect x="7" y="8" width="4" height="1"/><rect x="7" y="10" width="4" height="1"/><rect x="7" y="12" width="4" height="1"/></g></svg>
<div class="t" style="left:566px;top:152px;letter-spacing:0.72px">Source view: ./MainActivity.java</div>
<svg style="left:863px;top:152px" width="14" height="13" viewBox="0 0 14 13"><path d="M0.2 12.6 Q5 8.2 9.6 2.8 L10.9 4 Q6 9 0.9 12.9 Z" fill="#111"/><path d="M9.2 3.2 Q10.6 0.4 12.2 0.5 Q13.3 1.1 12.6 2.6 Q11.6 4.3 10.4 4.5 Z" fill="#111"/><path d="M3.2 0.9 Q3.6 0.6 4.1 1.1 L11.6 8.4 Q13.7 10.4 12.7 11.9 Q11.3 12.8 9.9 11.3 L3 1.6 Q2.8 1.1 3.2 0.9 Z" fill="#111"/></svg>
<div class="a" style="left:448px;top:173px;width:445px;height:1px;background:#fafafa;"></div>
<div class="a" style="left:0px;top:174px;width:26px;height:420px;background:#c6ffff;"></div>
<div class="a" style="left:30px;top:174px;width:863px;height:420px;background:#efefef;border:1px solid #a9a9a9"></div>
<div class="a" style="left:31px;top:175px;width:847px;height:385px;background:#c6ffff;"></div>
<div class="a" style="left:15px;top:188.7px;width:6px;height:6px;border-radius:3px;background:#5cc8ff"></div>
<div class="a" style="left:15px;top:203.7px;width:6px;height:6px;border-radius:3px;background:#5cc8ff"></div>
<div class="a" style="left:15px;top:218.7px;width:6px;height:6px;border-radius:3px;background:#5cc8ff"></div>
<div class="a" style="left:15px;top:263.7px;width:6px;height:6px;border-radius:3px;background:#5cc8ff"></div>
<div class="a" style="left:15px;top:308.7px;width:6px;height:6px;border-radius:3px;background:#5cc8ff"></div>
<div class="a" style="left:15px;top:383.7px;width:6px;height:6px;border-radius:3px;background:#5cc8ff"></div>
<div class="a" style="left:15px;top:413.7px;width:6px;height:6px;border-radius:3px;background:#5cc8ff"></div>
<div class="a" style="left:15px;top:428.7px;width:6px;height:6px;border-radius:3px;background:#5cc8ff"></div>
<div class="a" style="left:15px;top:443.7px;width:6px;height:6px;border-radius:3px;background:#5cc8ff"></div>
<div class="a" style="left:15px;top:458.7px;width:6px;height:6px;border-radius:3px;background:#5cc8ff"></div>
<div class="a" style="left:15px;top:473.7px;width:6px;height:6px;border-radius:3px;background:#5cc8ff"></div>
<div class="a" style="left:14px;top:233px;width:8.5px;height:8px;border-radius:4.25px;background:#ff0000"></div>
<div class="a" style="left:0px;top:230px;width:17px;height:15px;background:#4646fa;"></div>
<div class="t" style="left:1px;top:232px;font-family:'Liberation Mono';font-weight:bold;font-size:12px;color:#fff;letter-spacing:0.5px">IP</div>
<svg style="left:28px;top:377px" width="1" height="18" viewBox="0 0 1 18"><rect x="0" y="0" width="1" height="1" fill="#a8a8a8"/><rect x="0" y="3" width="1" height="1" fill="#a8a8a8"/><rect x="0" y="6" width="1" height="1" fill="#a8a8a8"/><rect x="0" y="9" width="1" height="1" fill="#a8a8a8"/><rect x="0" y="12" width="1" height="1" fill="#a8a8a8"/><rect x="0" y="15" width="1" height="1" fill="#a8a8a8"/></svg>
<svg style="left:895px;top:362px" width="1" height="18" viewBox="0 0 1 18"><rect x="0" y="0" width="1" height="1" fill="#a8a8a8"/><rect x="0" y="3" width="1" height="1" fill="#a8a8a8"/><rect x="0" y="6" width="1" height="1" fill="#a8a8a8"/><rect x="0" y="9" width="1" height="1" fill="#a8a8a8"/><rect x="0" y="12" width="1" height="1" fill="#a8a8a8"/><rect x="0" y="15" width="1" height="1" fill="#a8a8a8"/></svg>
<svg style="left:35px;top:195px" width="8" height="5" viewBox="0 0 8 5"><path d="M0 0 L8 0 L4 4.5 Z" fill="#505a5a"/></svg>
<div class="a" style="left:31px;top:235px;width:847px;height:15px;background:#7d5f73;"></div>
<div class="a" style="left:31px;top:235px;width:16px;height:1px;background:#3a8cc8;"></div>
<div class="a" style="left:31px;top:235px;width:1px;height:15px;background:#3a8cc8;"></div>
<div class="cl" style="left:47px;top:176px;width:831px;overflow:hidden"><span style="color:#000">CODE:0004EE44</span> <span style="color:#0000ff">.line 22</span></div>
<div class="cl" style="left:47px;top:191px;width:831px;overflow:hidden"><span style="color:#000">CODE:0004EE44</span> <span style="color:#000080">invoke-virtual</span>                  <span style="color:#000080">{this},</span> <span style="color:#0000ff">&lt;ref MainActivity.getMenuInflater() imp. @ _dex</span></div>
<div class="cl" style="left:47px;top:206px;width:831px;overflow:hidden"><span style="color:#000">CODE:0004EE4A</span> <span style="color:#000080">move-result-object</span>              <span style="color:#000080">v0</span></div>
<div class="cl" style="left:47px;top:221px;width:831px;overflow:hidden"><span style="color:#000">CODE:0004EE4C</span> <span style="color:#000080">const</span>                           <span style="color:#000080">v1, </span><span style="color:#008040">0x7F070001</span></div>
<div class="cl" style="left:47px;top:236px;width:831px;overflow:hidden"><span style="color:#0000ff">CODE:0004EE52</span> <span style="color:#000080">invoke-virtual</span>                  <span style="color:#000080">{v0, v1, menu},</span> <span style="color:#0000ff">&lt;void MenuInflater.inflate(int, ref)</span></div>
<div class="cl" style="left:47px;top:251px;width:831px;overflow:hidden"><span style="color:#000">CODE:0004EE58</span> <span style="color:#0000ff">.line 23</span></div>
<div class="cl" style="left:47px;top:266px;width:831px;overflow:hidden"><span style="color:#000">CODE:0004EE58</span> <span style="color:#000080">const/4</span>                         <span style="color:#000080">v0, </span><span style="color:#008040">1</span></div>
<div class="cl" style="left:47px;top:281px;width:831px;overflow:hidden"><span style="color:#000">CODE:0004EE5A</span></div>
<div class="cl" style="left:47px;top:296px;width:831px;overflow:hidden"><span style="color:#000">CODE:0004EE5A</span> <span style="color:#808080">locret:</span></div>
<div class="cl" style="left:47px;top:311px;width:831px;overflow:hidden"><span style="color:#000">CODE:0004EE5A</span> <span style="color:#000080">return</span>                          <span style="color:#000080">v0</span></div>
<div class="cl" style="left:47px;top:326px;width:831px;overflow:hidden"><span style="color:#000">CODE:0004EE5A</span> <span style="color:#0000ff">Method End</span></div>
<div class="cl" style="left:47px;top:341px;width:831px;overflow:hidden"><span style="color:#000">CODE:0004EE5A</span> <span style="color:#808080"># ---------------------------------------------------------------------------</span></div>
<div class="cl" style="left:47px;top:356px;width:831px;overflow:hidden"><span style="color:#808080">CODE:0004EE5C</span> <span style="color:#0000ff"># ============================================================================</span></div>
<div class="cl" style="left:47px;top:371px;width:831px;overflow:hidden"><span style="color:#808080">CODE:0004EE5C</span> <span style="color:#0000ff"># Method 5099 (0x13eb)</span></div>
<div class="cl" style="left:47px;top:386px;width:831px;overflow:hidden"><span style="color:#808080">CODE:0004EE5C</span> <span style="color:#000080">word_4EE5C:.short </span><span style="color:#008040">6</span>                     <span style="color:#8080ff"># DATA XREF: CODE:000898F7↓i</span></div>
<div class="cl" style="left:47px;top:401px;width:831px;overflow:hidden"><span style="color:#808080">CODE:0004EE5C</span>                                         <span style="color:#0000ff"># Number of registers : 0x6</span></div>
<div class="cl" style="left:47px;top:416px;width:831px;overflow:hidden"><span style="color:#808080">CODE:0004EE5E</span> <span style="color:#000080">.short </span><span style="color:#008040">2</span>                                <span style="color:#0000ff"># Size of input args (in words) : 0x2</span></div>
<div class="cl" style="left:47px;top:431px;width:831px;overflow:hidden"><span style="color:#808080">CODE:0004EE60</span> <span style="color:#000080">.short </span><span style="color:#008040">3</span>                                <span style="color:#0000ff"># Size of output args (in words) : 0x3</span></div>
<div class="cl" style="left:47px;top:446px;width:831px;overflow:hidden"><span style="color:#808080">CODE:0004EE62</span> <span style="color:#000080">.short </span><span style="color:#008040">0</span>                                <span style="color:#0000ff"># Number of try_items : 0x0</span></div>
<div class="cl" style="left:47px;top:461px;width:831px;overflow:hidden"><span style="color:#808080">CODE:0004EE64</span> <span style="color:#000080">.int </span><span style="color:#008040">0x809EE</span>                            <span style="color:#0000ff"># Debug info</span></div>
<div class="cl" style="left:47px;top:476px;width:831px;overflow:hidden"><span style="color:#808080">CODE:0004EE68</span> <span style="color:#000080">.int </span><span style="color:#008040">0x20</span>                               <span style="color:#0000ff"># Size of bytecode (in 16-bit units): 0x20</span></div>
<div class="cl" style="left:47px;top:491px;width:831px;overflow:hidden"><span style="color:#000">CODE:0004EE6C</span> <span style="color:#0000ff"># Source file: MainActivity.java</span></div>
<div class="cl" style="left:47px;top:506px;width:831px;overflow:hidden"><span style="color:#000">CODE:0004EE6C</span> <span style="color:#0000ff">public void com.example.myfirstapp.MainActivity.sendMessage(</span></div>
<div class="cl" style="left:47px;top:521px;width:831px;overflow:hidden"><span style="color:#000">CODE:0004EE6C</span>       <span style="color:#0000ff">android.view.View view)</span></div>
<div class="cl" style="left:47px;top:536px;width:831px;overflow:hidden"><span style="color:#000">CODE:0004EE6C</span> <span style="color:#000080">this = v4</span></div>
<div class="a" style="left:31px;top:550px;width:847px;height:10px;overflow:hidden">
<div class="cl" style="left:16px;top:1px;width:831px"><span style="color:#000">CODE:0004EE6C</span> <span style="color:#000080">view = v5</span></div></div>
<div class="t" style="left:33px;top:564px;font-family:'Liberation Mono';font-size:13px;letter-spacing:0;color:#484848">0004EE52 0004EE52: MainActivity_onCreateOptionsMenu@ZL+E (Synchronized with IP)</div>
<div class="a" style="left:31px;top:578px;width:847px;height:1px;background:#c8c8c8;"></div>
<div class="a" style="left:878px;top:175px;width:14px;height:404px;background:#e4e4e4;border-left:1px solid #c8c8c8"></div>
<div class="a" style="left:878px;top:175px;width:14px;height:13px;background:linear-gradient(90deg,#fdfdfd,#f2f2f2);border-left:1px solid #c8c8c8;border-bottom:1px solid #d0d0d0"></div>
<svg style="left:881px;top:179px" width="8" height="5" viewBox="0 0 8 5"><path d="M0 4.5 L8 4.5 L4 0 Z" fill="#555"/></svg>
<div class="a" style="left:878px;top:389px;width:14px;height:28px;background:linear-gradient(90deg,#ffffff,#f0f0f0);border:1px solid #c4c4c4"></div>
<div class="a" style="left:878px;top:565px;width:14px;height:14px;background:linear-gradient(90deg,#fdfdfd,#f2f2f2);border-left:1px solid #c8c8c8;border-top:1px solid #d0d0d0"></div>
<svg style="left:881px;top:570px" width="8" height="5" viewBox="0 0 8 5"><path d="M0 0 L8 0 L4 4.5 Z" fill="#555"/></svg>
<div class="a" style="left:31px;top:579px;width:847px;height:14px;background:linear-gradient(#fbfbfb,#ececec);border-top:1px solid #c8c8c8"></div>
<div class="a" style="left:31px;top:579px;width:13px;height:14px;background:linear-gradient(#fdfdfd,#f0f0f0);border-right:1px solid #cfcfcf;border-top:1px solid #c8c8c8"></div>
<svg style="left:36px;top:582px" width="5" height="8" viewBox="0 0 5 8"><path d="M4.5 0 L4.5 8 L0 4 Z" fill="#555"/></svg>
<div class="a" style="left:641px;top:579px;width:224px;height:14px;background:#dcdcdc;border-top:1px solid #c8c8c8;border-left:1px solid #c8c8c8"></div>
<div class="a" style="left:864px;top:579px;width:14px;height:14px;background:linear-gradient(#fdfdfd,#f0f0f0);border-left:1px solid #cfcfcf;border-top:1px solid #c8c8c8"></div>
<svg style="left:868px;top:582px" width="5" height="8" viewBox="0 0 5 8"><path d="M0 0 L0 8 L4.5 4 Z" fill="#555"/></svg>
<div class="a" style="left:878px;top:579px;width:14px;height:14px;background:#efefef;border-top:1px solid #c8c8c8;border-left:1px solid #c8c8c8"></div>
<div class="a" style="left:897px;top:142px;width:383px;height:30px;background:#efefef;border:1px solid #c4c4c4"></div>
<svg style="left:901px;top:148px" width="16" height="16" viewBox="0 0 16 16"><rect x="0.5" y="0.5" width="15" height="15" rx="1.5" fill="#f6f6f6" stroke="#6a6a6a"/><rect x="1" y="1" width="14" height="3" fill="#12d4fc"/><line x1="1" y1="4.2" x2="15" y2="4.2" stroke="#777" stroke-width="0.6"/><g stroke="#4a5a5a" stroke-width="0.9" fill="none"><path d="M3.4 6.2 L5.8 8.2 M2.8 9.6 H5.4 M3.4 13.2 L5.8 11.4 M12.6 6.2 L10.2 8.2 M13.2 9.6 H10.6 M12.6 13.2 L10.2 11.4"/></g><ellipse cx="8" cy="6" rx="2" ry="1.4" fill="#3a1a10"/><ellipse cx="8" cy="10" rx="2.9" ry="3.9" fill="#e82a08"/><line x1="8" y1="6.5" x2="8" y2="13.8" stroke="#902010" stroke-width="0.8"/></svg>
<div class="t" style="left:923px;top:149px;">General registers</div>
<svg style="left:1209px;top:152px" width="10" height="12" viewBox="0 0 10 12"><rect x="0.5" y="0.5" width="8" height="10" fill="none" stroke="#555" stroke-width="1"/><rect x="0" y="0" width="9" height="2" fill="#555"/></svg>
<svg style="left:1234px;top:152px" width="12" height="12" viewBox="0 0 12 12"><rect x="0.5" y="0.5" width="10" height="10" rx="2.5" fill="none" stroke="#6a6a6a"/><rect x="4.5" y="2.5" width="4" height="4" rx="1" fill="none" stroke="#555"/><rect x="2.5" y="4.5" width="4" height="4" rx="1" fill="#fff" stroke="#555"/></svg>
<svg style="left:1260px;top:152px" width="12" height="12" viewBox="0 0 12 12"><rect x="0.5" y="0.5" width="10" height="10" rx="2.5" fill="none" stroke="#6a6a6a"/><path d="M2.8 2.8 L8.2 8.2 M8.2 2.8 L2.8 8.2" stroke="#555" stroke-width="1.9"/></svg>
<div class="a" style="left:897px;top:174px;width:383px;height:119px;background:#efefef;border:1px solid #c4c4c4"></div>
<div class="a" style="left:898px;top:175px;width:382px;height:103px;background:#c6ffff;"></div>
<div class="cl" style="left:900px;top:180px;color:#0000ff">IP</div>
<div class="cl" style="left:919px;top:180px;color:#0000ff">0004EE52</div>
<div class="cl" style="left:1010px;top:180px;color:#0000ff;width:270px;overflow:hidden">MainActivity_onCreateOptionsMenu</div>
<svg style="left:991px;top:177px" width="18" height="18" viewBox="0 0 18 18"><circle cx="8.4" cy="8.4" r="7.1" fill="#00d4c4" stroke="#2a4848" stroke-width="1"/><rect x="6" y="5.8" width="10.6" height="10.6" fill="#ffffff" stroke="#3a5858" stroke-width="1.2"/><text x="11.2" y="14.2" font-family="Liberation Serif" font-size="8.5" text-anchor="middle" fill="#222" letter-spacing="0">IP</text></svg>
<div class="a" style="left:898px;top:278px;width:382px;height:14px;background:linear-gradient(#fbfbfb,#efefef);border-top:1px solid #c8c8c8"></div>
<div class="a" style="left:898px;top:278px;width:14px;height:14px;background:linear-gradient(#fdfdfd,#f0f0f0);border-right:1px solid #cfcfcf;border-top:1px solid #c8c8c8"></div>
<svg style="left:903px;top:281px" width="5" height="8" viewBox="0 0 5 8"><path d="M4.5 0 L4.5 8 L0 4 Z" fill="#555"/></svg>
<div class="a" style="left:1227px;top:278px;width:39px;height:14px;background:#dcdcdc;border-top:1px solid #c8c8c8;border-left:1px solid #c8c8c8"></div>
<div class="a" style="left:1266px;top:278px;width:14px;height:14px;background:linear-gradient(#fdfdfd,#f0f0f0);border-left:1px solid #cfcfcf;border-top:1px solid #c8c8c8"></div>
<svg style="left:1271px;top:281px" width="5" height="8" viewBox="0 0 5 8"><path d="M0 0 L0 8 L4.5 4 Z" fill="#555"/></svg>
<svg style="left:1081px;top:294px" width="18" height="2" viewBox="0 0 18 2"><rect x="0" y="0" width="1" height="1" fill="#b0b0b0"/><rect x="3" y="0" width="1" height="1" fill="#b0b0b0"/><rect x="6" y="0" width="1" height="1" fill="#b0b0b0"/><rect x="9" y="0" width="1" height="1" fill="#b0b0b0"/><rect x="12" y="0" width="1" height="1" fill="#b0b0b0"/><rect x="15" y="0" width="1" height="1" fill="#b0b0b0"/></svg>
<div class="a" style="left:897px;top:297px;width:383px;height:30px;background:#efefef;border:1px solid #c4c4c4"></div>
<svg style="left:901px;top:303px" width="16" height="16" viewBox="0 0 16 16"><rect x="0.5" y="0.5" width="15" height="15" rx="1.5" fill="#f6f6f6" stroke="#6a6a6a"/><rect x="1" y="1" width="14" height="3" fill="#12d4fc"/><line x1="1" y1="4.2" x2="15" y2="4.2" stroke="#777" stroke-width="0.6"/><g fill="none" stroke="#333" stroke-width="0.9"><circle cx="8" cy="7.8" r="2.2"/><circle cx="5.6" cy="11.5" r="2.2"/><circle cx="10.4" cy="11.5" r="2.2"/><line x1="8" y1="9.5" x2="8" y2="15"/></g></svg>
<div class="t" style="left:923px;top:304px;">Modules</div>
<svg style="left:1209px;top:307px" width="10" height="12" viewBox="0 0 10 12"><rect x="0.5" y="0.5" width="8" height="10" fill="none" stroke="#555" stroke-width="1"/><rect x="0" y="0" width="9" height="2" fill="#555"/></svg>
<svg style="left:1234px;top:307px" width="12" height="12" viewBox="0 0 12 12"><rect x="0.5" y="0.5" width="10" height="10" rx="2.5" fill="none" stroke="#6a6a6a"/><rect x="4.5" y="2.5" width="4" height="4" rx="1" fill="none" stroke="#555"/><rect x="2.5" y="4.5" width="4" height="4" rx="1" fill="#fff" stroke="#555"/></svg>
<svg style="left:1260px;top:307px" width="12" height="12" viewBox="0 0 12 12"><rect x="0.5" y="0.5" width="10" height="10" rx="2.5" fill="none" stroke="#6a6a6a"/><path d="M2.8 2.8 L8.2 8.2 M8.2 2.8 L2.8 8.2" stroke="#555" stroke-width="1.9"/></svg>
<div class="a" style="left:897px;top:329px;width:383px;height:92px;background:#ffffff;border:1px solid #c4c4c4"></div>
<div class="hdr" style="left:898px;top:330px;width:381px;height:21px"></div>
<div class="t" style="left:900px;top:333px;">Path</div>
<svg style="left:901px;top:352px" width="16" height="16" viewBox="0 0 16 16"><rect x="0.5" y="0.5" width="15" height="15" rx="1.5" fill="#f6f6f6" stroke="#6a6a6a"/><rect x="1" y="1" width="14" height="3" fill="#12d4fc"/><line x1="1" y1="4.2" x2="15" y2="4.2" stroke="#777" stroke-width="0.6"/><g fill="none" stroke="#333" stroke-width="0.9"><circle cx="8" cy="7.8" r="2.2"/><circle cx="5.6" cy="11.5" r="2.2"/><circle cx="10.4" cy="11.5" r="2.2"/><line x1="8" y1="9.5" x2="8" y2="15"/></g></svg>
<div class="t" style="left:923px;top:353px;">&lt;JDWP process&gt;</div>
<div class="a" style="left:898px;top:406px;width:382px;height:14px;background:linear-gradient(#fbfbfb,#efefef);border-top:1px solid #c8c8c8"></div>
<div class="a" style="left:898px;top:406px;width:14px;height:14px;background:linear-gradient(#fdfdfd,#f0f0f0);border-right:1px solid #cfcfcf;border-top:1px solid #c8c8c8"></div>
<svg style="left:903px;top:409px" width="5" height="8" viewBox="0 0 5 8"><path d="M4.5 0 L4.5 8 L0 4 Z" fill="#555"/></svg>
<div class="a" style="left:1110px;top:406px;width:160px;height:14px;background:#dcdcdc;border-top:1px solid #c8c8c8;border-left:1px solid #c8c8c8"></div>
<div class="a" style="left:1266px;top:406px;width:14px;height:14px;background:linear-gradient(#fdfdfd,#f0f0f0);border-left:1px solid #cfcfcf;border-top:1px solid #c8c8c8"></div>
<svg style="left:1271px;top:409px" width="5" height="8" viewBox="0 0 5 8"><path d="M0 0 L0 8 L4.5 4 Z" fill="#555"/></svg>
<svg style="left:1081px;top:444px" width="18" height="2" viewBox="0 0 18 2"><rect x="0" y="0" width="1" height="1" fill="#b0b0b0"/><rect x="3" y="0" width="1" height="1" fill="#b0b0b0"/><rect x="6" y="0" width="1" height="1" fill="#b0b0b0"/><rect x="9" y="0" width="1" height="1" fill="#b0b0b0"/><rect x="12" y="0" width="1" height="1" fill="#b0b0b0"/><rect x="15" y="0" width="1" height="1" fill="#b0b0b0"/></svg>
<div class="a" style="left:897px;top:447px;width:383px;height:30px;background:#efefef;border:1px solid #c4c4c4"></div>
<svg style="left:901px;top:453px" width="16" height="16" viewBox="0 0 16 16"><rect x="0.5" y="0.5" width="15" height="15" rx="1.5" fill="#f6f6f6" stroke="#6a6a6a"/><rect x="1" y="1" width="14" height="3" fill="#12d4fc"/><line x1="1" y1="4.2" x2="15" y2="4.2" stroke="#777" stroke-width="0.6"/><circle cx="5" cy="10.3" r="2.4" fill="#222"/><g stroke="#555" stroke-width="0.7" fill="none"><path d="M6.5 10.3 L12.5 6.5 M6.5 10.3 L12.5 10.3 M6.5 10.3 L12.5 14"/></g><g fill="none" stroke="#666" stroke-width="0.6"><circle cx="12.8" cy="6.5" r="0.9"/><circle cx="12.8" cy="10.3" r="0.9"/><circle cx="12.8" cy="14" r="0.9"/></g></svg>
<div class="t" style="left:923px;top:454px;">Threads</div>
<svg style="left:1209px;top:457px" width="10" height="12" viewBox="0 0 10 12"><rect x="0.5" y="0.5" width="8" height="10" fill="none" stroke="#555" stroke-width="1"/><rect x="0" y="0" width="9" height="2" fill="#555"/></svg>
<svg style="left:1234px;top:457px" width="12" height="12" viewBox="0 0 12 12"><rect x="0.5" y="0.5" width="10" height="10" rx="2.5" fill="none" stroke="#6a6a6a"/><rect x="4.5" y="2.5" width="4" height="4" rx="1" fill="none" stroke="#555"/><rect x="2.5" y="4.5" width="4" height="4" rx="1" fill="#fff" stroke="#555"/></svg>
<svg style="left:1260px;top:457px" width="12" height="12" viewBox="0 0 12 12"><rect x="0.5" y="0.5" width="10" height="10" rx="2.5" fill="none" stroke="#6a6a6a"/><path d="M2.8 2.8 L8.2 8.2 M8.2 2.8 L2.8 8.2" stroke="#555" stroke-width="1.9"/></svg>
<div class="a" style="left:897px;top:479px;width:383px;height:115px;background:#ffffff;border:1px solid #c4c4c4"></div>
<div class="hdr" style="left:898px;top:480px;width:366px;height:21px"></div>
<div class="a" style="left:980px;top:481px;width:1px;height:19px;background:#d4d4d4;"></div>
<div class="a" style="left:1040px;top:481px;width:1px;height:19px;background:#d4d4d4;"></div>
<div class="a" style="left:1157px;top:481px;width:1px;height:19px;background:#d4d4d4;"></div>
<div class="t" style="left:900px;top:483px;">Decimal</div>
<div class="t" style="left:983px;top:483px;">Hex</div>
<div class="t" style="left:1043px;top:483px;">State</div>
<div class="t" style="left:1160px;top:483px;">Name</div>
<div class="a" style="left:898px;top:501px;width:366px;height:78px;overflow:hidden">
<svg style="left:3px;top:1px" width="16" height="16" viewBox="0 0 16 16"><rect x="0.5" y="0.5" width="15" height="15" rx="1.5" fill="#f6f6f6" stroke="#6a6a6a"/><rect x="1" y="1" width="14" height="3" fill="#12d4fc"/><circle cx="5" cy="10.3" r="2.4" fill="#222"/><g stroke="#555" stroke-width="0.7" fill="none"><path d="M6.5 10.3 L12.5 6.5 M6.5 10.3 L12.5 10.3 M6.5 10.3 L12.5 14"/></g><g fill="none" stroke="#666" stroke-width="0.6"><circle cx="12.8" cy="6.5" r="0.9"/><circle cx="12.8" cy="10.3" r="0.9"/><circle cx="12.8" cy="14" r="0.9"/></g></svg>
<div class="t" style="left:25px;top:2px;font-weight:bold;">1</div>
<div class="t" style="left:86px;top:2px;font-weight:bold;">1</div>
<div class="t" style="left:145px;top:2px;font-weight:bold;">Ready</div>
<div class="t" style="left:262px;top:2px;font-weight:bold;width:104px;overflow:hidden;letter-spacing:0.95px">&lt;JDWP process&gt;</div>
<svg style="left:3px;top:20px" width="16" height="16" viewBox="0 0 16 16"><rect x="0.5" y="0.5" width="15" height="15" rx="1.5" fill="#f6f6f6" stroke="#6a6a6a"/><rect x="1" y="1" width="14" height="3" fill="#12d4fc"/><circle cx="5" cy="10.3" r="2.4" fill="#222"/><g stroke="#555" stroke-width="0.7" fill="none"><path d="M6.5 10.3 L12.5 6.5 M6.5 10.3 L12.5 10.3 M6.5 10.3 L12.5 14"/></g><g fill="none" stroke="#666" stroke-width="0.6"><circle cx="12.8" cy="6.5" r="0.9"/><circle cx="12.8" cy="10.3" r="0.9"/><circle cx="12.8" cy="14" r="0.9"/></g></svg>
<div class="t" style="left:25px;top:21px;">10</div>
<div class="t" style="left:86px;top:21px;">A</div>
<div class="t" style="left:145px;top:21px;">Ready</div>
<div class="t" style="left:262px;top:21px;width:104px;overflow:hidden;letter-spacing:1.1px">&lt;10&gt; Binder_2</div>
<svg style="left:3px;top:39px" width="16" height="16" viewBox="0 0 16 16"><rect x="0.5" y="0.5" width="15" height="15" rx="1.5" fill="#f6f6f6" stroke="#6a6a6a"/><rect x="1" y="1" width="14" height="3" fill="#12d4fc"/><circle cx="5" cy="10.3" r="2.4" fill="#222"/><g stroke="#555" stroke-width="0.7" fill="none"><path d="M6.5 10.3 L12.5 6.5 M6.5 10.3 L12.5 10.3 M6.5 10.3 L12.5 14"/></g><g fill="none" stroke="#666" stroke-width="0.6"><circle cx="12.8" cy="6.5" r="0.9"/><circle cx="12.8" cy="10.3" r="0.9"/><circle cx="12.8" cy="14" r="0.9"/></g></svg>
<div class="t" style="left:25px;top:40px;">9</div>
<div class="t" style="left:86px;top:40px;">9</div>
<div class="t" style="left:145px;top:40px;">Ready</div>
<div class="t" style="left:262px;top:40px;width:104px;overflow:hidden;letter-spacing:1.1px">&lt;9&gt; Binder_1</div>
<svg style="left:3px;top:58px" width="16" height="16" viewBox="0 0 16 16"><rect x="0.5" y="0.5" width="15" height="15" rx="1.5" fill="#f6f6f6" stroke="#6a6a6a"/><rect x="1" y="1" width="14" height="3" fill="#12d4fc"/><circle cx="5" cy="10.3" r="2.4" fill="#222"/><g stroke="#555" stroke-width="0.7" fill="none"><path d="M6.5 10.3 L12.5 6.5 M6.5 10.3 L12.5 10.3 M6.5 10.3 L12.5 14"/></g><g fill="none" stroke="#666" stroke-width="0.6"><circle cx="12.8" cy="6.5" r="0.9"/><circle cx="12.8" cy="10.3" r="0.9"/><circle cx="12.8" cy="14" r="0.9"/></g></svg>
<div class="t" style="left:25px;top:59px;">8</div>
<div class="t" style="left:86px;top:59px;">8</div>
<div class="t" style="left:145px;top:59px;">Ready</div>
<div class="t" style="left:262px;top:59px;width:104px;overflow:hidden;letter-spacing:1.1px">&lt;8&gt; FinalizerWatchdogDaemon</div>
<svg style="left:3px;top:77px" width="16" height="16" viewBox="0 0 16 16"><rect x="0.5" y="0.5" width="15" height="15" rx="1.5" fill="#f6f6f6" stroke="#6a6a6a"/><rect x="1" y="1" width="14" height="3" fill="#12d4fc"/><circle cx="5" cy="10.3" r="2.4" fill="#222"/><g stroke="#555" stroke-width="0.7" fill="none"><path d="M6.5 10.3 L12.5 6.5 M6.5 10.3 L12.5 10.3 M6.5 10.3 L12.5 14"/></g><g fill="none" stroke="#666" stroke-width="0.6"><circle cx="12.8" cy="6.5" r="0.9"/><circle cx="12.8" cy="10.3" r="0.9"/><circle cx="12.8" cy="14" r="0.9"/></g></svg>
<div class="t" style="left:25px;top:78px;">7</div>
<div class="t" style="left:86px;top:78px;">7</div>
<div class="t" style="left:145px;top:78px;">Ready</div>
<div class="t" style="left:262px;top:78px;width:104px;overflow:hidden;letter-spacing:1.1px">&lt;7&gt;</div>
</div>
<div class="a" style="left:1264px;top:480px;width:15px;height:99px;background:#e4e4e4;border-left:1px solid #c8c8c8"></div>
<div class="a" style="left:1264px;top:480px;width:15px;height:14px;background:linear-gradient(90deg,#fdfdfd,#f2f2f2);border-left:1px solid #c8c8c8;border-bottom:1px solid #d0d0d0"></div>
<svg style="left:1268px;top:484px" width="8" height="5" viewBox="0 0 8 5"><path d="M0 4.5 L8 4.5 L4 0 Z" fill="#555"/></svg>
<div class="a" style="left:1264px;top:494px;width:15px;height:28px;background:linear-gradient(90deg,#ffffff,#f0f0f0);border:1px solid #c8c8c8"></div>
<div class="a" style="left:1264px;top:565px;width:15px;height:14px;background:linear-gradient(90deg,#fdfdfd,#f2f2f2);border-left:1px solid #c8c8c8;border-top:1px solid #d0d0d0"></div>
<svg style="left:1268px;top:569px" width="8" height="5" viewBox="0 0 8 5"><path d="M0 0 L8 0 L4 4.5 Z" fill="#555"/></svg>
<div class="a" style="left:898px;top:579px;width:366px;height:14px;background:linear-gradient(#fbfbfb,#efefef);border-top:1px solid #c8c8c8"></div>
<div class="a" style="left:898px;top:579px;width:14px;height:14px;background:linear-gradient(#fdfdfd,#f0f0f0);border-right:1px solid #cfcfcf;border-top:1px solid #c8c8c8"></div>
<svg style="left:903px;top:582px" width="5" height="8" viewBox="0 0 5 8"><path d="M4.5 0 L4.5 8 L0 4 Z" fill="#555"/></svg>
<div class="a" style="left:1184px;top:579px;width:80px;height:14px;background:#dcdcdc;border-top:1px solid #c8c8c8;border-left:1px solid #c8c8c8"></div>
<div class="a" style="left:1250px;top:579px;width:14px;height:14px;background:linear-gradient(#fdfdfd,#f0f0f0);border-left:1px solid #cfcfcf;border-top:1px solid #c8c8c8"></div>
<svg style="left:1255px;top:582px" width="5" height="8" viewBox="0 0 5 8"><path d="M0 0 L0 8 L4.5 4 Z" fill="#555"/></svg>
<div class="a" style="left:1264px;top:579px;width:15px;height:14px;background:#efefef;border-top:1px solid #c8c8c8;border-left:1px solid #c8c8c8"></div>
<svg style="left:633px;top:595px" width="18" height="2" viewBox="0 0 18 2"><rect x="0" y="0" width="1" height="1" fill="#b0b0b0"/><rect x="3" y="0" width="1" height="1" fill="#b0b0b0"/><rect x="6" y="0" width="1" height="1" fill="#b0b0b0"/><rect x="9" y="0" width="1" height="1" fill="#b0b0b0"/><rect x="12" y="0" width="1" height="1" fill="#b0b0b0"/><rect x="15" y="0" width="1" height="1" fill="#b0b0b0"/></svg>
<div class="tabun" style="left:0;top:600px;width:641px;height:29px"></div>
<div class="a" style="left:0px;top:629px;width:641px;height:1px;background:#f6f6f6;"></div>
<svg style="left:12px;top:606px" width="16" height="16" viewBox="0 0 16 16"><rect x="0.5" y="0.5" width="15" height="15" rx="1.5" fill="#f6f6f6" stroke="#6a6a6a"/><rect x="1" y="1" width="14" height="3" fill="#12d4fc"/><line x1="1" y1="4.2" x2="15" y2="4.2" stroke="#777" stroke-width="0.6"/><circle cx="8" cy="9.4" r="4.3" fill="none" stroke="#222" stroke-width="1.1"/><path d="M4.3 11.2 Q8 15 11.7 11.2" fill="none" stroke="#222" stroke-width="2"/><ellipse cx="8" cy="11.3" rx="1.3" ry="2" fill="#30f090"/></svg>
<div class="t" style="left:282px;top:608px;">Hex View-1</div>
<svg style="left:609px;top:608px" width="14" height="13" viewBox="0 0 14 13"><path d="M0.2 12.6 Q5 8.2 9.6 2.8 L10.9 4 Q6 9 0.9 12.9 Z" fill="#111"/><path d="M9.2 3.2 Q10.6 0.4 12.2 0.5 Q13.3 1.1 12.6 2.6 Q11.6 4.3 10.4 4.5 Z" fill="#111"/><path d="M3.2 0.9 Q3.6 0.6 4.1 1.1 L11.6 8.4 Q13.7 10.4 12.7 11.9 Q11.3 12.8 9.9 11.3 L3 1.6 Q2.8 1.1 3.2 0.9 Z" fill="#111"/></svg>
<div class="tabsel" style="left:641px;top:598px;width:639px;height:33px"></div>
<svg style="left:652px;top:605px" width="16" height="16" viewBox="0 0 16 16"><rect x="0.5" y="0.5" width="15" height="15" rx="1.5" fill="#f6f6f6" stroke="#6a6a6a"/><rect x="1" y="1" width="14" height="3" fill="#12d4fc"/><line x1="1" y1="4.2" x2="15" y2="4.2" stroke="#777" stroke-width="0.6"/><g fill="#f8f8f8" stroke="#5a5a5a" stroke-width="1"><path d="M3.6 5.5 H9.8 V9.2 H3.6 Q1.8 9.2 1.8 7.35 Q1.8 5.5 3.6 5.5 Z"/><path d="M5 9.2 H11.4 Q13.2 9.2 13.2 11 Q13.2 12.8 11.4 12.8 H5 Z"/></g></svg>
<div class="t" style="left:938px;top:608px;">Locals</div>
<svg style="left:1250px;top:607px" width="14" height="13" viewBox="0 0 14 13"><path d="M0.2 12.6 Q5 8.2 9.6 2.8 L10.9 4 Q6 9 0.9 12.9 Z" fill="#111"/><path d="M9.2 3.2 Q10.6 0.4 12.2 0.5 Q13.3 1.1 12.6 2.6 Q11.6 4.3 10.4 4.5 Z" fill="#111"/><path d="M3.2 0.9 Q3.6 0.6 4.1 1.1 L11.6 8.4 Q13.7 10.4 12.7 11.9 Q11.3 12.8 9.9 11.3 L3 1.6 Q2.8 1.1 3.2 0.9 Z" fill="#111"/></svg>
<div class="a" style="left:0px;top:630px;width:641px;height:1px;background:#b4b4b4;"></div>
<div class="a" style="left:0px;top:630px;width:1280px;height:143px;background:#ffffff;border:1px solid #bdbdbd"></div>
<div class="hdr" style="left:1px;top:631px;width:1278px;height:21px"></div>
<div class="a" style="left:64px;top:632px;width:1px;height:19px;background:#d4d4d4;"></div>
<div class="a" style="left:484px;top:632px;width:1px;height:19px;background:#d4d4d4;"></div>
<div class="a" style="left:884px;top:632px;width:1px;height:19px;background:#d4d4d4;"></div>
<div class="t" style="left:3px;top:634px;">Name</div>
<div class="t" style="left:68px;top:634px;">Value</div>
<div class="t" style="left:488px;top:634px;">Type</div>
<div class="t" style="left:888px;top:634px;">Location</div>
<svg style="left:9px;top:659px" width="5" height="9" viewBox="0 0 5 9"><path d="M0 0 L4.5 4.5 L0 9 Z" fill="#606060"/></svg>
<div class="t" style="left:24px;top:655px;">this</div>
<div class="t" style="left:69px;top:655px;">{mActionBar=,mActivityInfo=,mAllLoaderManagers=,mAppli…</div>
<div class="t" style="left:488px;top:655px;">com.example.myfirstapp.MainActivity *</div>
<div class="t" style="left:888px;top:655px;">v2</div>
<svg style="left:9px;top:679px" width="5" height="9" viewBox="0 0 5 9"><path d="M0 0 L4.5 4.5 L0 9 Z" fill="#606060"/></svg>
<div class="t" style="left:24px;top:675px;">menu</div>
<div class="t" style="left:69px;top:675px;">{mActionItems=,mCallback=,mContext=,mCurrentMenuInfo…</div>
<div class="t" style="left:488px;top:675px;">com.android.internal.view.menu.MenuBuilder *</div>
<div class="t" style="left:888px;top:675px;">v3</div>
<div class="t" style="left:24px;top:695px;">v0</div>
<div class="t" style="left:69px;top:695px;">Bad type</div>
<div class="t" style="left:488px;top:695px;"></div>
<div class="t" style="left:888px;top:695px;">v0</div>
<div class="t" style="left:24px;top:715px;">v1</div>
<div class="t" style="left:69px;top:715px;">Bad type</div>
<div class="t" style="left:488px;top:715px;"></div>
<div class="t" style="left:888px;top:715px;">v1</div>
<svg style="left:1px;top:774px" width="9" height="2" viewBox="0 0 9 2"><rect x="0" y="0" width="1" height="1" fill="#b0b0b0"/><rect x="3" y="0" width="1" height="1" fill="#b0b0b0"/><rect x="6" y="0" width="1" height="1" fill="#b0b0b0"/></svg>
<svg style="left:633px;top:774px" width="18" height="2" viewBox="0 0 18 2"><rect x="0" y="0" width="1" height="1" fill="#b0b0b0"/><rect x="3" y="0" width="1" height="1" fill="#b0b0b0"/><rect x="6" y="0" width="1" height="1" fill="#b0b0b0"/><rect x="9" y="0" width="1" height="1" fill="#b0b0b0"/><rect x="12" y="0" width="1" height="1" fill="#b0b0b0"/><rect x="15" y="0" width="1" height="1" fill="#b0b0b0"/></svg>
<div class="a" style="left:0px;top:777px;width:1280px;height:30px;background:#ffffff;border:1px solid #c4c4c4"></div>
<svg style="left:4px;top:783px" width="16" height="16" viewBox="0 0 16 16"><rect x="0.5" y="0.5" width="15" height="15" rx="1.5" fill="#f6f6f6" stroke="#6a6a6a"/><rect x="1" y="1" width="14" height="3" fill="#12d4fc"/><line x1="1" y1="4.2" x2="15" y2="4.2" stroke="#777" stroke-width="0.6"/><rect x="3" y="4.5" width="10" height="10.5" rx="1.5" fill="#a8a8a8"/><rect x="3.8" y="5" width="8.4" height="9.2" rx="1" fill="#e2e2e2"/><g fill="#1a78c0"><rect x="4.8" y="6" width="1.2" height="1"/><rect x="4.8" y="8" width="1.2" height="1"/><rect x="4.8" y="10" width="1.2" height="1"/><rect x="4.8" y="12" width="1.2" height="1"/></g><g fill="#222"><rect x="7" y="6" width="4" height="1"/><rect x="7" y="8" width="4" height="1"/><rect x="7" y="10" width="4" height="1"/><rect x="7" y="12" width="4" height="1"/></g></svg>
<div class="t" style="left:26px;top:785px;">Output</div>
<svg style="left:1209px;top:787px" width="10" height="12" viewBox="0 0 10 12"><rect x="0.5" y="0.5" width="8" height="10" fill="none" stroke="#555" stroke-width="1"/><rect x="0" y="0" width="9" height="2" fill="#555"/></svg>
<svg style="left:1234px;top:787px" width="12" height="12" viewBox="0 0 12 12"><rect x="0.5" y="0.5" width="10" height="10" rx="2.5" fill="none" stroke="#6a6a6a"/><rect x="4.5" y="2.5" width="4" height="4" rx="1" fill="none" stroke="#555"/><rect x="2.5" y="4.5" width="4" height="4" rx="1" fill="#fff" stroke="#555"/></svg>
<svg style="left:1260px;top:787px" width="12" height="12" viewBox="0 0 12 12"><rect x="0.5" y="0.5" width="10" height="10" rx="2.5" fill="none" stroke="#6a6a6a"/><path d="M2.8 2.8 L8.2 8.2 M8.2 2.8 L2.8 8.2" stroke="#555" stroke-width="1.9"/></svg>
<div class="a" style="left:0px;top:809px;width:1280px;height:129px;background:#ffffff;border:1px solid #c4c4c4"></div>
<div class="a" style="left:1px;top:810px;width:1263px;height:127px;overflow:hidden">
<div class="cl" style="left:6px;top:-7px">FFFFFFFF: thread has started (tid=6) &lt;6&gt; ReferenceQueueDaemon</div>
<div class="cl" style="left:6px;top:8px">FFFFFFFF: thread has started (tid=5) &lt;5&gt; Compiler</div>
<div class="cl" style="left:6px;top:23px">FFFFFFFF: thread has started (tid=3) &lt;3&gt; Signal Catcher</div>
<div class="cl" style="left:6px;top:38px">FFFFFFFF: thread has started (tid=2) &lt;2&gt; GC</div>
<div class="cl" style="left:6px;top:53px">FFFFFFFF: thread has started (tid=11) &lt;11&gt; AsyncTask #1</div>
<div class="cl" style="left:6px;top:68px">FFFFFFFF: thread has started (tid=12) &lt;12&gt; AsyncTask #2</div>
<div class="cl" style="left:6px;top:83px">FFFFFFFF: thread has started (tid=13) &lt;13&gt; Binder_3</div>
<div class="cl" style="left:6px;top:98px">Python&gt;ida_kernwin.set_dock_pos("Locals", "Hex View-1", ida_kernwin.DP_TAB)</div>
<div class="cl" style="left:6px;top:113px">True</div>
</div>
<div class="a" style="left:1265px;top:810px;width:14px;height:127px;background:#e4e4e4;border-left:1px solid #c8c8c8"></div>
<div class="a" style="left:1265px;top:810px;width:14px;height:14px;background:linear-gradient(90deg,#fdfdfd,#f2f2f2);border-left:1px solid #c8c8c8;border-bottom:1px solid #d0d0d0"></div>
<svg style="left:1268px;top:815px" width="8" height="5" viewBox="0 0 8 5"><path d="M0 4.5 L8 4.5 L4 0 Z" fill="#555"/></svg>
<div class="a" style="left:1265px;top:895px;width:14px;height:28px;background:linear-gradient(90deg,#ffffff,#f0f0f0);border:1px solid #c8c8c8"></div>
<div class="a" style="left:1265px;top:923px;width:14px;height:14px;background:linear-gradient(90deg,#fdfdfd,#f2f2f2);border-left:1px solid #c8c8c8;border-top:1px solid #d0d0d0"></div>
<svg style="left:1268px;top:928px" width="8" height="5" viewBox="0 0 8 5"><path d="M0 0 L8 0 L4 4.5 Z" fill="#555"/></svg>
<div class="a" style="left:1px;top:939px;width:71px;height:25px;border:1px solid #b8b8b8;border-radius:3px;background:linear-gradient(#fcfcfc,#ececec)"></div>
<div class="t" style="left:25px;top:944px;">IDC</div>
<div class="a" style="left:75px;top:940px;width:1204px;height:23px;border:1px solid #bcbcbc;border-radius:2px;background:#fff"></div>
<div class="t" style="left:2px;top:970px;font-family:'Liberation Mono';font-size:13px;letter-spacing:0;color:#222">AU:</div>
<div class="t" style="left:41px;top:970px;font-family:'Liberation Mono';font-size:13px;letter-spacing:0;color:#222">idle</div>
<div class="t" style="left:94px;top:970px;font-family:'Liberation Mono';font-size:13px;letter-spacing:0;color:#222">Down</div>
<div class="t" style="left:170px;top:970px;font-family:'Liberation Mono';font-size:13px;letter-spacing:0;color:#222">Disk: 169GB</div>
</body></html>
